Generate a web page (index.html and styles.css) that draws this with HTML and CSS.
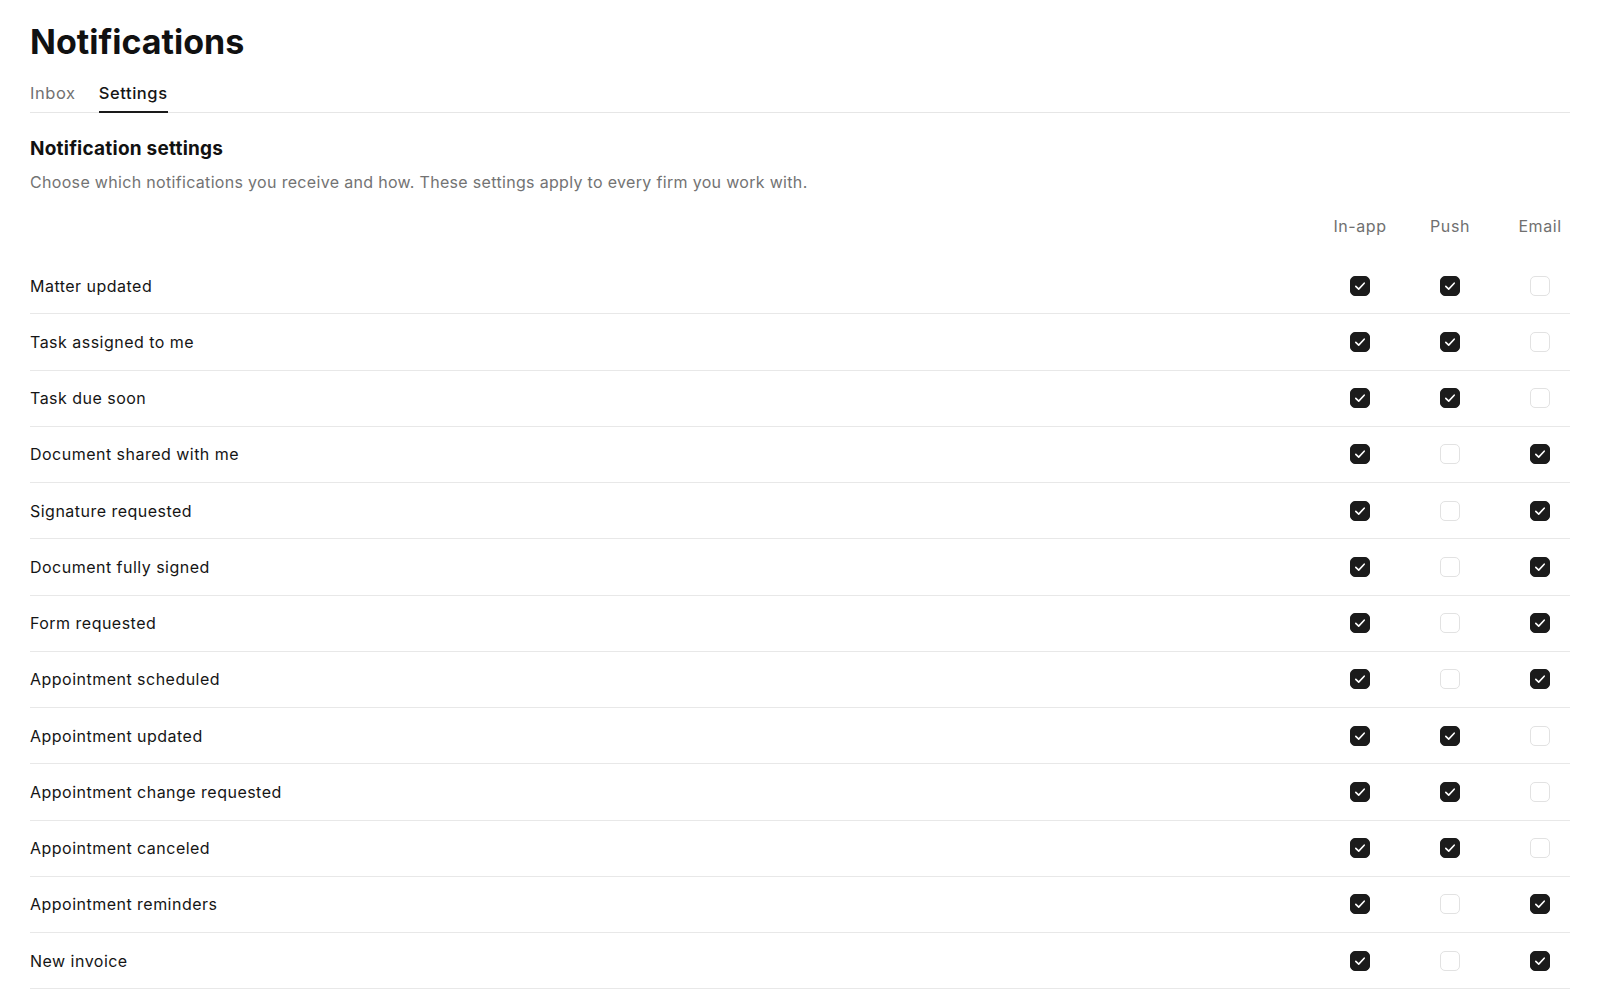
FILE: index.html
```html
<!DOCTYPE html>
<html lang="en">
<head>
<meta charset="utf-8">
<title>Notifications</title>
<link rel="stylesheet" href="styles.css">
</head>
<body>
<main class="page">
  <h1 class="title">Notifications</h1>
  <nav class="tabs">
    <span class="tab">Inbox</span>
    <span class="tab tab-active">Settings</span>
  </nav>
  <section class="settings">
    <h2 class="section-title">Notification settings</h2>
    <p class="section-desc">Choose which notifications you receive and how. These settings apply to every firm you work with.</p>
    <div class="grid head">
      <span></span>
      <span class="col-head">In-app</span>
      <span class="col-head">Push</span>
      <span class="col-head">Email</span>
    </div>
    <div id="rows"></div>
  </section>
</main>
<script src="app.js"></script>
</body>
</html>
```
FILE: styles.css
```css
* { box-sizing: border-box; }
html, body { margin: 0; background: #ffffff; }
body {
  font-family: Inter, "Noto Sans", "Liberation Sans", sans-serif;
  color: #151515;
  -webkit-font-smoothing: antialiased;
}
.page { padding: 22px 30px 0 30px; }
.title {
  margin: 0;
  font-size: 34px;
  line-height: 40px;
  font-weight: 700;
  letter-spacing: 0;
  color: #111111;
}
.tabs {
  display: flex;
  gap: 23px;
  margin-top: 19px;
  border-bottom: 1px solid #e6e6e6;
}
.tab {
  position: relative;
  font-size: 16.5px;
  line-height: 24px;
  padding-bottom: 7px;
  letter-spacing: 0.035em;
  color: #717171;
}
.tab-active { color: #151515; font-weight: 500; }
.tab-active::after {
  content: "";
  position: absolute;
  left: 0; right: 0; bottom: -1px;
  height: 2px;
  background: #1a1a1a;
}
.settings { padding-top: 22px; }
.section-title {
  margin: 0;
  font-size: 19px;
  line-height: 28px;
  font-weight: 700;
  letter-spacing: 0.012em;
  color: #111111;
}
.section-desc {
  margin: 7px 0 0 0;
  font-size: 16px;
  line-height: 24px;
  letter-spacing: 0.02em;
  color: #737373;
}
.grid {
  display: grid;
  grid-template-columns: 1fr 60px 60px 60px;
  column-gap: 30px;
  align-items: center;
}
.head { height: 64px; }
.col-head {
  text-align: center;
  font-size: 16px;
  line-height: 24px;
  letter-spacing: 0.035em;
  color: #707070;
  white-space: nowrap;
}
.row {
  height: 56.25px;
  border-bottom: 1px solid #e8e8e8;
}
.label {
  font-size: 16px;
  line-height: 24px;
  letter-spacing: 0.03em;
  color: #151515;
}
.cell { display: flex; justify-content: center; }
.box {
  width: 20px;
  height: 20px;
  border-radius: 5px;
  border: 1px solid #e2e2e2;
  background: #ffffff;
  display: flex;
  align-items: center;
  justify-content: center;
}
.box.on { background: #1b1b1b; border-color: #1b1b1b; }
.box svg { display: block; }
```
FILE: app.js
```js
const data = [
  ["Matter updated", 1, 1, 0],
  ["Task assigned to me", 1, 1, 0],
  ["Task due soon", 1, 1, 0],
  ["Document shared with me", 1, 0, 1],
  ["Signature requested", 1, 0, 1],
  ["Document fully signed", 1, 0, 1],
  ["Form requested", 1, 0, 1],
  ["Appointment scheduled", 1, 0, 1],
  ["Appointment updated", 1, 1, 0],
  ["Appointment change requested", 1, 1, 0],
  ["Appointment canceled", 1, 1, 0],
  ["Appointment reminders", 1, 0, 1],
  ["New invoice", 1, 0, 1]
];
const check = '<svg width="14" height="14" viewBox="0 0 14 14"><path d="M2.8 7.3 L5.7 10.1 L11.2 4.2" fill="none" stroke="#ffffff" stroke-width="1.6" stroke-linecap="round" stroke-linejoin="round"/></svg>';
const rows = document.getElementById("rows");
rows.innerHTML = data.map(([label, a, p, e]) => {
  const cell = v => `<span class="cell"><span class="box${v ? " on" : ""}" role="checkbox" aria-checked="${v ? "true" : "false"}">${v ? check : ""}</span></span>`;
  return `<div class="grid row"><span class="label">${label}</span>${cell(a)}${cell(p)}${cell(e)}</div>`;
}).join("");
```
